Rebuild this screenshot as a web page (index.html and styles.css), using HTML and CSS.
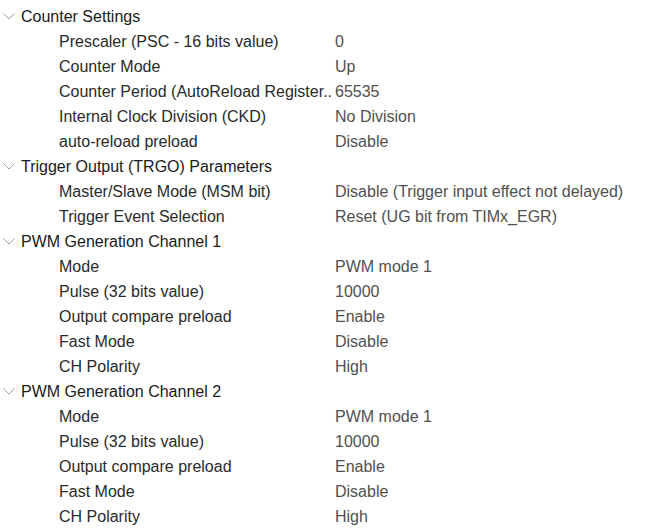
FILE: index.html
```html
<!DOCTYPE html>
<html>
<head>
<meta charset="utf-8">
<link rel="stylesheet" href="styles.css">
</head>
<body>
<div class="tree">
  <div class="group">
    <div class="head"><svg class="chev" width="12" height="7" viewBox="0 0 12 7"><path d="M0.5 0.5 L6 6 L11.5 0.5" fill="none" stroke="#a0a0a0" stroke-width="1"/></svg><span>Counter Settings</span></div>
    <div class="row"><span class="k">Prescaler (PSC - 16 bits value)</span><span class="v">0</span></div>
    <div class="row"><span class="k">Counter Mode</span><span class="v">Up</span></div>
    <div class="row"><span class="k">Counter Period (AutoReload Register..</span><span class="v">65535</span></div>
    <div class="row"><span class="k">Internal Clock Division (CKD)</span><span class="v">No Division</span></div>
    <div class="row"><span class="k">auto-reload preload</span><span class="v">Disable</span></div>
  </div>
  <div class="group">
    <div class="head"><svg class="chev" width="12" height="7" viewBox="0 0 12 7"><path d="M0.5 0.5 L6 6 L11.5 0.5" fill="none" stroke="#a0a0a0" stroke-width="1"/></svg><span>Trigger Output (TRGO) Parameters</span></div>
    <div class="row"><span class="k">Master/Slave Mode (MSM bit)</span><span class="v">Disable (Trigger input effect not delayed)</span></div>
    <div class="row"><span class="k">Trigger Event Selection</span><span class="v">Reset (UG bit from TIMx_EGR)</span></div>
  </div>
  <div class="group">
    <div class="head"><svg class="chev" width="12" height="7" viewBox="0 0 12 7"><path d="M0.5 0.5 L6 6 L11.5 0.5" fill="none" stroke="#a0a0a0" stroke-width="1"/></svg><span>PWM Generation Channel 1</span></div>
    <div class="row"><span class="k">Mode</span><span class="v">PWM mode 1</span></div>
    <div class="row"><span class="k">Pulse (32 bits value)</span><span class="v">10000</span></div>
    <div class="row"><span class="k">Output compare preload</span><span class="v">Enable</span></div>
    <div class="row"><span class="k">Fast Mode</span><span class="v">Disable</span></div>
    <div class="row"><span class="k">CH Polarity</span><span class="v">High</span></div>
  </div>
  <div class="group">
    <div class="head"><svg class="chev" width="12" height="7" viewBox="0 0 12 7"><path d="M0.5 0.5 L6 6 L11.5 0.5" fill="none" stroke="#a0a0a0" stroke-width="1"/></svg><span>PWM Generation Channel 2</span></div>
    <div class="row"><span class="k">Mode</span><span class="v">PWM mode 1</span></div>
    <div class="row"><span class="k">Pulse (32 bits value)</span><span class="v">10000</span></div>
    <div class="row"><span class="k">Output compare preload</span><span class="v">Enable</span></div>
    <div class="row"><span class="k">Fast Mode</span><span class="v">Disable</span></div>
    <div class="row"><span class="k">CH Polarity</span><span class="v">High</span></div>
  </div>
</div>
</body>
</html>
```
FILE: styles.css
```css
html, body {
  margin: 0;
  padding: 0;
  background: #ffffff;
}
body {
  font-family: "Liberation Sans", Arial, sans-serif;
  font-size: 16px;
}
.tree {
  padding-top: 4px;
  display: flex;
  flex-direction: column;
}
.head {
  height: 25px;
  display: flex;
  align-items: center;
  color: #1a1a1a;
}
.chev {
  margin-left: 3px;
  margin-right: 6px;
  flex: none;
}
.row {
  height: 25px;
  display: flex;
  align-items: center;
}
.k {
  width: 276px;
  padding-left: 59px;
  color: #2a2a2a;
  white-space: nowrap;
  overflow: hidden;
  flex: none;
}
.v {
  color: #505050;
  white-space: nowrap;
}
```
